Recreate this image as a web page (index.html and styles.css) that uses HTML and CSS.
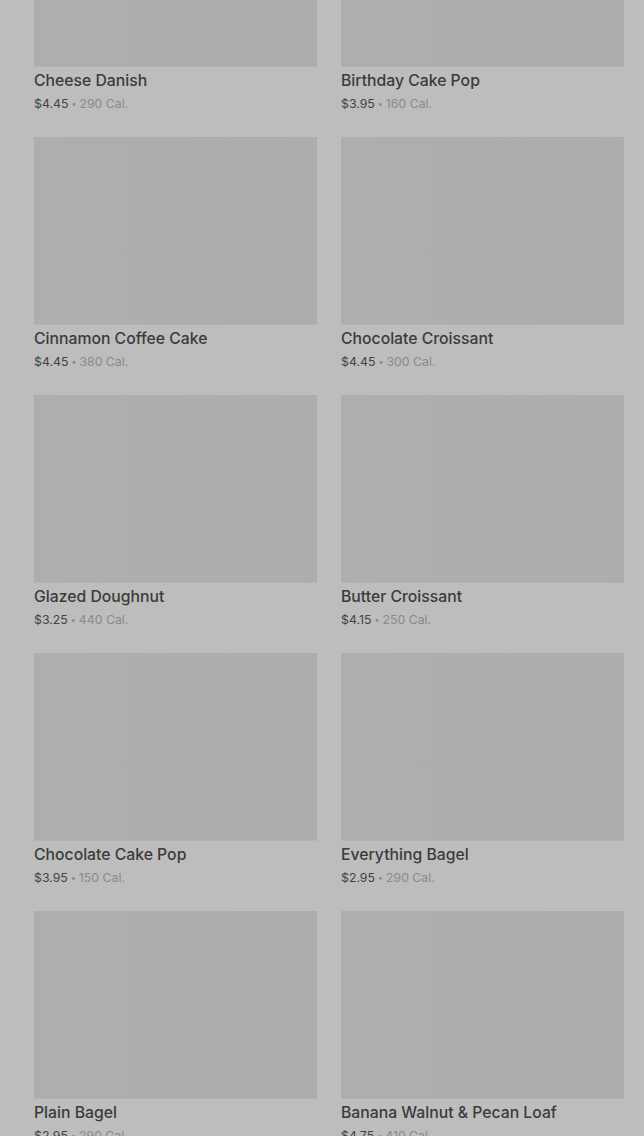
FILE: index.html
```html
<!DOCTYPE html>
<html lang="en">
  <head>
    <meta charset="UTF-8" />
    <meta name="viewport" content="width=device-width, initial-scale=1.0" />
    <title>Bakery</title>
    <link rel="stylesheet" href="styles.css">
  </head>
  <body>
    <div class="grid">
      <div class="card">
        <div class="photo"></div>
        <h3 class="name">Cheese Danish</h3>
        <p class="meta"><span class="price">$4.45</span><span class="dot">&bull;</span>290 Cal.</p>
      </div>
      <div class="card">
        <div class="photo"></div>
        <h3 class="name">Birthday Cake Pop</h3>
        <p class="meta"><span class="price">$3.95</span><span class="dot">&bull;</span>160 Cal.</p>
      </div>
      <div class="card">
        <div class="photo"></div>
        <h3 class="name">Cinnamon Coffee Cake</h3>
        <p class="meta"><span class="price">$4.45</span><span class="dot">&bull;</span>380 Cal.</p>
      </div>
      <div class="card">
        <div class="photo"></div>
        <h3 class="name">Chocolate Croissant</h3>
        <p class="meta"><span class="price">$4.45</span><span class="dot">&bull;</span>300 Cal.</p>
      </div>
      <div class="card">
        <div class="photo"></div>
        <h3 class="name">Glazed Doughnut</h3>
        <p class="meta"><span class="price">$3.25</span><span class="dot">&bull;</span>440 Cal.</p>
      </div>
      <div class="card">
        <div class="photo"></div>
        <h3 class="name">Butter Croissant</h3>
        <p class="meta"><span class="price">$4.15</span><span class="dot">&bull;</span>250 Cal.</p>
      </div>
      <div class="card">
        <div class="photo"></div>
        <h3 class="name">Chocolate Cake Pop</h3>
        <p class="meta"><span class="price">$3.95</span><span class="dot">&bull;</span>150 Cal.</p>
      </div>
      <div class="card">
        <div class="photo"></div>
        <h3 class="name">Everything Bagel</h3>
        <p class="meta"><span class="price">$2.95</span><span class="dot">&bull;</span>290 Cal.</p>
      </div>
      <div class="card">
        <div class="photo"></div>
        <h3 class="name">Plain Bagel</h3>
        <p class="meta"><span class="price">$2.95</span><span class="dot">&bull;</span>290 Cal.</p>
      </div>
      <div class="card">
        <div class="photo"></div>
        <h3 class="name">Banana Walnut &amp; Pecan Loaf</h3>
        <p class="meta"><span class="price">$4.75</span><span class="dot">&bull;</span>410 Cal.</p>
      </div>
    </div>
  </body>
</html>
```

FILE: styles.css
```css
body {
  margin: 0;
  background: #bdbdbd;
  font-family: "Inter", "Roboto", sans-serif;
  color: #3a3a3a;
  overflow: hidden;
}
.grid {
  display: grid;
  grid-template-columns: 1fr 1fr;
  column-gap: 24px;
  row-gap: 22px;
  padding: 0 20px 0 34px;
  margin-top: -121px;
}
.photo {
  height: 187px;
  background: linear-gradient(90deg, #aeaeae, #adadad);
  border-bottom: 1px solid #b3b3b3;
}
.name {
  margin: 3px 0 0;
  font-size: 15.75px;
  line-height: 22px;
  font-weight: 500;
  color: #3b3b3b;
}
.meta {
  margin: 1px 0 0;
  font-size: 12.3px;
  line-height: 22px;
  color: #8a8a8a;
}
.price {
  color: #434343;
}
.dot {
  font-size: 9px;
  margin: 0 3px;
  vertical-align: 1px;
}
```
